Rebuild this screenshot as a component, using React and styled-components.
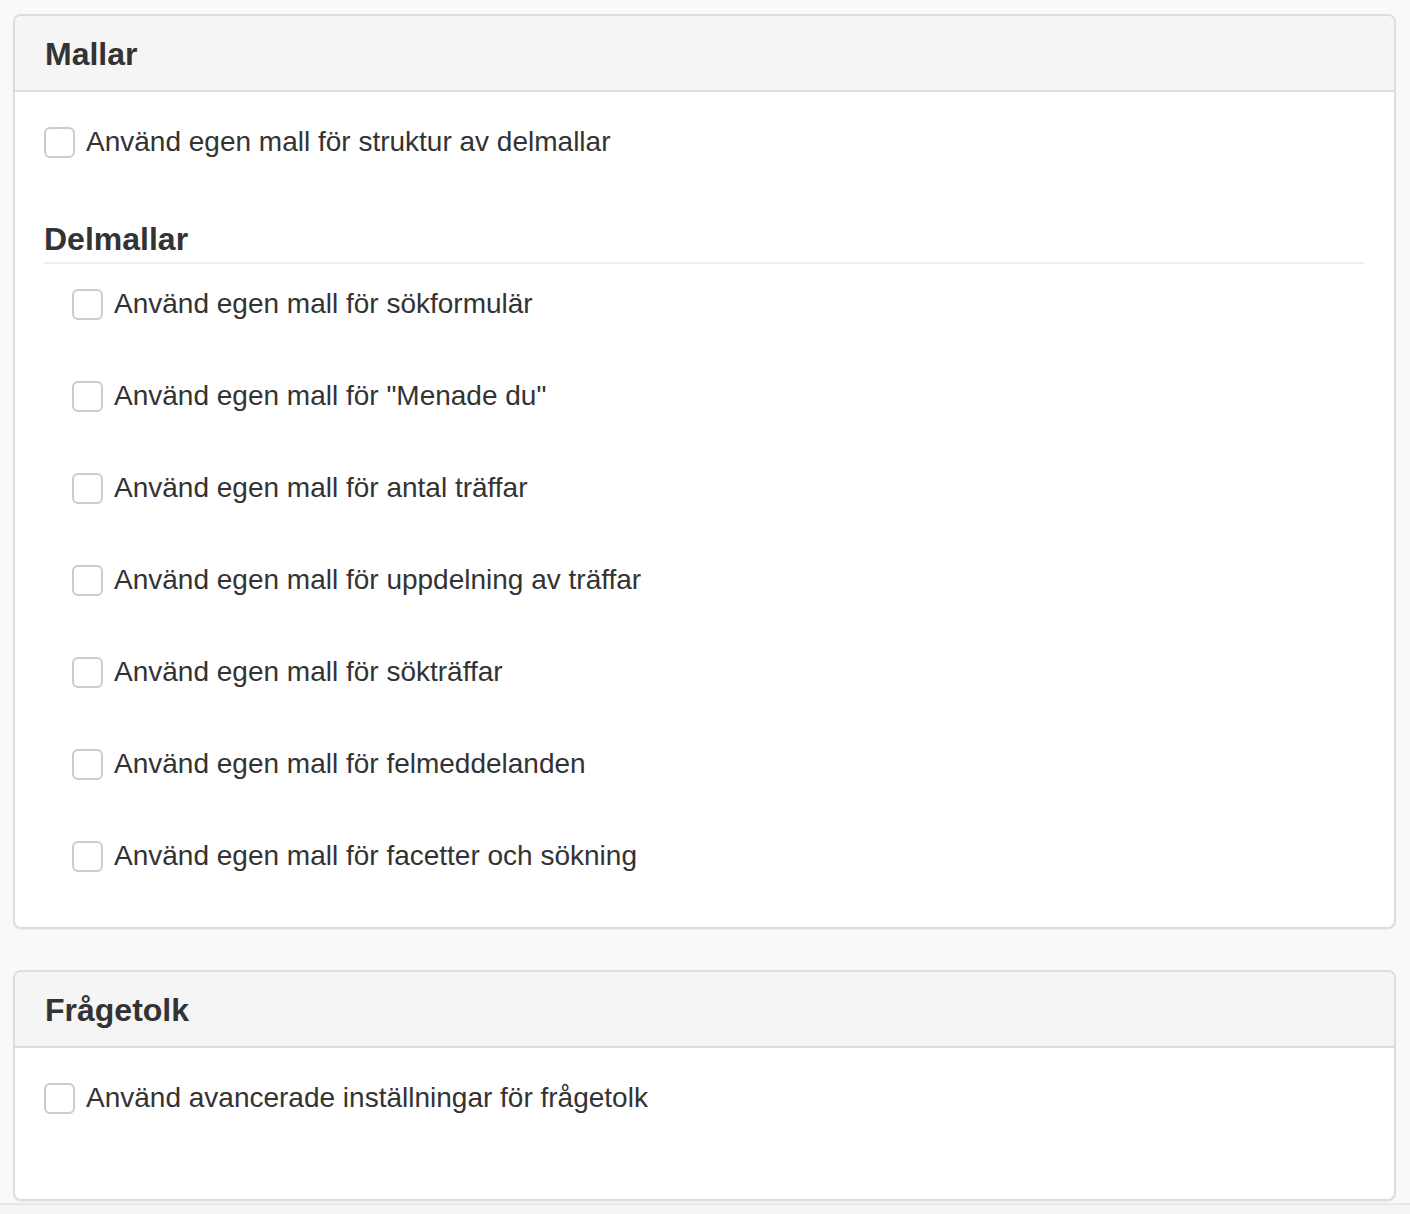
import React from 'react';
import styled, { createGlobalStyle } from 'styled-components';

const GlobalStyle = createGlobalStyle`
    html, body {
        margin: 0;
        padding: 0;
        background: #f9f9f9;
        font-family: 'Liberation Sans', Arial, Helvetica, sans-serif;
        color: #333;
    }
`;

const Page = styled.div`
    padding: 14px 14px 0 13px;
`;

const Panel = styled.section`
    background: #fff;
    border: 2px solid #ddd;
    border-radius: 8px;
    box-shadow: 0 1px 2px rgba(0, 0, 0, 0.05);
    margin-bottom: 41px;
    overflow: hidden;
`;

const PanelHeader = styled.div`
    background: #f5f5f5;
    border-bottom: 2px solid #ddd;
    padding: 20px 30px 18px 30px;
`;

const PanelTitle = styled.h3`
    margin: 0;
    font-size: 32px;
    line-height: 36px;
    font-weight: bold;
    color: #333;
`;

const PanelBody = styled.div`
    padding: 30px 30px ${props => props.bottom || 30}px 29px;
`;

const SubHeading = styled.h4`
    margin: 58px 0 20px 0;
    padding: 1px 0 5px 0;
    border-bottom: 2px solid #eee;
    font-size: 32px;
    line-height: 36px;
    font-weight: bold;
    color: #333;
`;

const SubList = styled.div`
    display: flex;
    flex-direction: column;
    gap: 52px;
    padding-left: 28px;
`;

const CheckRow = styled.label`
    display: flex;
    align-items: center;
    gap: 11px;
    height: 40px;
    font-size: 28px;
    line-height: 40px;
    cursor: pointer;
`;

const Box = styled.input.attrs({ type: 'checkbox' })`
    appearance: none;
    margin: 0;
    width: 31px;
    height: 31px;
    box-sizing: border-box;
    border: 2px solid #ccc;
    border-radius: 6px;
    background: #fff;
    flex-shrink: 0;
`;

const Footer = styled.div`
    border-top: 2px solid #e8e8e8;
    background: #f5f5f5;
    height: 40px;
    margin-top: -39px;
`;

const subTemplates = [
    'Använd egen mall för sökformulär',
    'Använd egen mall för "Menade du"',
    'Använd egen mall för antal träffar',
    'Använd egen mall för uppdelning av träffar',
    'Använd egen mall för sökträffar',
    'Använd egen mall för felmeddelanden',
    'Använd egen mall för facetter och sökning',
];

const Check = ({ label }) => (
    <CheckRow>
        <Box />
        <span>{label}</span>
    </CheckRow>
);

export default function App() {
    return (
        <>
            <GlobalStyle />
            <Page>
                <Panel>
                    <PanelHeader>
                        <PanelTitle>Mallar</PanelTitle>
                    </PanelHeader>
                    <PanelBody bottom={51}>
                        <Check label="Använd egen mall för struktur av delmallar" />
                        <SubHeading>Delmallar</SubHeading>
                        <SubList>
                            {subTemplates.map(t => <Check key={t} label={t} />)}
                        </SubList>
                    </PanelBody>
                </Panel>
                <Panel>
                    <PanelHeader>
                        <PanelTitle>Frågetolk</PanelTitle>
                    </PanelHeader>
                    <PanelBody bottom={81}>
                        <Check label="Använd avancerade inställningar för frågetolk" />
                    </PanelBody>
                </Panel>
            </Page>
            <Footer />
        </>
    );
}
